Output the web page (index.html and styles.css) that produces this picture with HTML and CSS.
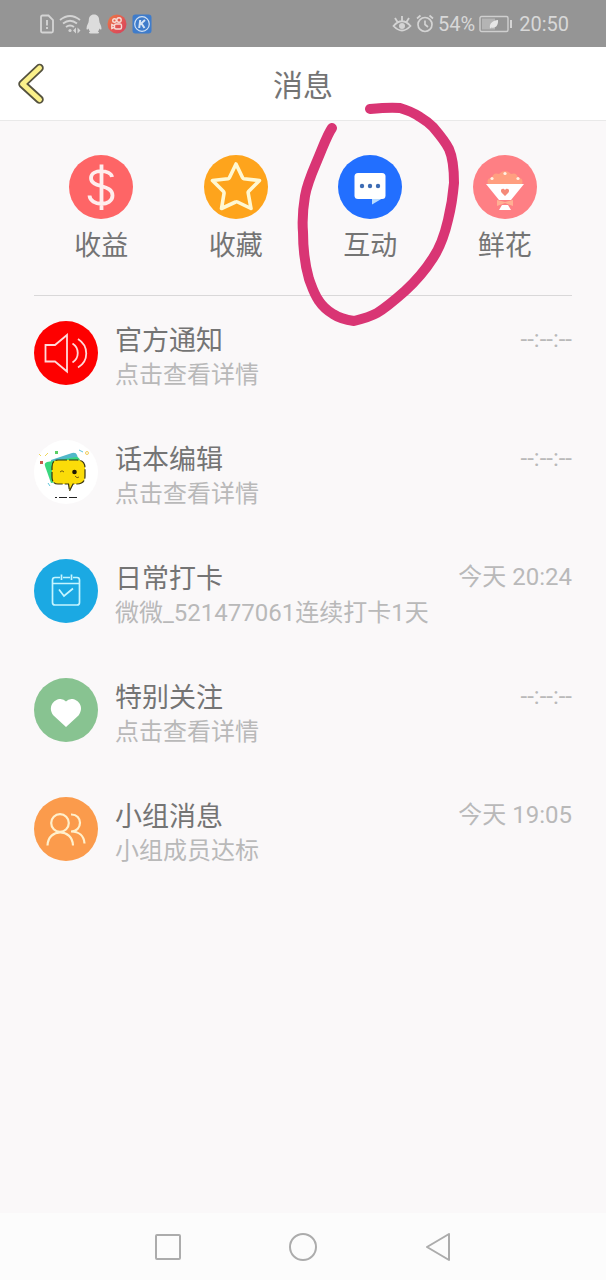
FILE: index.html
```html
<!DOCTYPE html>
<html lang="zh-CN">
<head>
  <meta charset="UTF-8">
  <meta name="viewport" content="width=device-width, initial-scale=1.0">
  <title>消息</title>
  <link rel="stylesheet" href="styles.css">
</head>
<body>
  <div class="status-bar">
    <div class="status-left">
      <svg width="14" height="20" viewBox="0 0 14 20" fill="none" stroke="#d4d4d4" stroke-width="1.8">
        <path d="M2.500 1.500H8.500L13 6V17Q13 18.500 11.500 18.500H2.500Q1 18.500 1 17V3Q1 1.500 2.500 1.500Z"/>
        <path d="M7 6V11.500M7 13V15"/>
      </svg>
      <svg width="22" height="20" viewBox="0 0 22 20" fill="none" stroke="#d4d4d4" stroke-width="1.8">
        <path d="M1 6Q11 -2 21 6M4 9.500Q11 4 18 9.500M7 13Q11 10 15 13"/>
        <circle cx="11" cy="16.500" r="1.600" fill="#d4d4d4" stroke="none"/>
        <path d="M14 16.500L17 13.500V19.500ZM21.500 16.500L18.500 13.500V19.500Z" fill="#d4d4d4" stroke="none"/>
      </svg>
      <svg width="16" height="20" viewBox="0 0 16 20" fill="#dcdcdc">
        <path d="M8 0.500C4.500 0.500 2.800 3 2.800 6.500C2.800 9 0.500 11.500 0.500 14.500C0.500 16 1.500 16 2.500 14.500C3 16 3.500 17 4.200 17.500C2.500 18 2.500 19.500 4.500 19.500H11.500C13.500 19.500 13.500 18 11.800 17.500C12.500 17 13 16 13.500 14.500C14.500 16 15.500 16 15.500 14.500C15.500 11.500 13.200 9 13.200 6.500C13.200 3 11.500 0.500 8 0.500Z"/>
      </svg>
      <svg width="20" height="20" viewBox="0 0 20 20">
        <defs>
          <linearGradient id="kwai" x1="0" y1="0" x2="1" y2="1">
            <stop offset="0" stop-color="#ed7b43"/>
            <stop offset="0.600" stop-color="#e05355"/>
            <stop offset="1" stop-color="#d3435c"/>
          </linearGradient>
        </defs>
        <circle cx="10" cy="10" r="9.500" fill="url(#kwai)"/>
        <g fill="none" stroke="#f8dcd5" stroke-width="1.400">
          <circle cx="7.500" cy="6.500" r="1.800"/>
          <circle cx="12" cy="6" r="2.200"/>
          <rect x="7.500" y="10" width="7" height="5" rx="1.500"/>
          <path d="M7 11.500L4.800 10.500V14.500L7 13.500"/>
        </g>
      </svg>
      <svg width="20" height="20" viewBox="0 0 20 20">
        <rect x="0.500" y="0.500" width="19" height="19" rx="3" fill="#3f7ccb"/>
        <g fill="none" stroke="#d5e3f4">
          <circle cx="10" cy="10" r="7.300" stroke-width="1.200"/>
          <path d="M8.200 6L7.200 14M13 6L8 10.500M9.500 9.500L12.500 14" stroke-width="2"/>
        </g>
      </svg>
    </div>
    <div class="status-right">
      <svg width="20" height="20" viewBox="0 0 20 20" fill="none" stroke="#d4d4d4" stroke-width="1.800">
        <path d="M1.500 12Q10 2.500 18.500 12Q10 21 1.500 12ZM10 2V7M3 4L5.500 8M17 4L14.500 8"/>
        <circle cx="10" cy="12" r="3" fill="#d4d4d4" stroke="none"/>
      </svg>
      <svg width="18" height="20" viewBox="0 0 18 20" fill="none" stroke="#d4d4d4" stroke-width="1.700">
        <circle cx="9" cy="10.500" r="7"/>
        <path d="M9 6.500V10.500L12 13M1 4.500L4.500 1.500M17 4.500L13.500 1.500"/>
      </svg>
      <span>54%</span>
      <svg width="34" height="18" viewBox="0 0 34 18">
        <rect x="1" y="1.500" width="28" height="15" rx="1.500" fill="none" stroke="#cfcfcf" stroke-width="1.400"/>
        <rect x="3" y="3.500" width="13" height="11" fill="#b4b4b4"/>
        <path d="M11 13.500C10 8 14 5.500 19 5C19.500 10 17 13.500 12.500 12.500Z" fill="#e6e6e6"/>
        <path d="M32 5V13" stroke="#d4d4d4" stroke-width="2"/>
      </svg>
      <span class="clock">20:50</span>
    </div>
  </div>

  <header class="header">
    <button class="back" type="button" aria-label="返回">
      <svg width="28" height="44" viewBox="0 0 28 44" fill="none" stroke-linecap="round" stroke-linejoin="round">
        <path d="M22.500 6L5.500 22L22.500 37.500" stroke="#55523f" stroke-width="8.500"/>
        <path d="M22.500 6L5.500 22L22.500 37.500" stroke="#faf08a" stroke-width="5"/>
      </svg>
    </button>
    <h1>消息</h1>
  </header>

  <main class="content">
    <nav class="shortcuts">
      <a class="shortcut" href="#">
        <svg class="icon" viewBox="0 0 64 64" fill="none">
          <circle cx="32" cy="32" r="32" fill="#fe6566"/>
          <path d="M43 22C42 14.500 22 13.500 22 23C22 33.500 43.500 28.500 43.500 40.500C43.500 52 21 51 20.500 40.500M32.500 9.500V55" stroke="#ffeded" stroke-width="3.800"/>
        </svg>
        <span>收益</span>
      </a>
      <a class="shortcut" href="#">
        <svg class="icon" viewBox="0 0 64 64" fill="none">
          <circle cx="32" cy="32" r="32" fill="#fea41c"/>
          <path d="M32 9L38.500 22.500Q39 23.500 40 23.700L55.500 25.500L44.500 36.500Q44 37 44.200 38L47 53.500L33.500 47Q32.500 46.500 31.500 47L17.500 53.500L20 38.500Q20.200 37.500 19.500 36.500L8.500 25.500L24 23.700Q25 23.500 25.500 22.500Z" stroke="#fff8d2" stroke-width="3.600" stroke-linejoin="round"/>
        </svg>
        <span>收藏</span>
      </a>
      <a class="shortcut" href="#">
        <svg class="icon" viewBox="0 0 64 64">
          <circle cx="32" cy="32" r="32" fill="#226fff"/>
          <path d="M34 43H45L34 49.500Z" fill="#b9dcff"/>
          <rect x="16.500" y="18" width="31" height="26" rx="3.500" fill="#fff"/>
          <g fill="#3d6cb4">
            <circle cx="24" cy="31" r="2.200"/>
            <circle cx="32" cy="31" r="2.200"/>
            <circle cx="40" cy="31" r="2.200"/>
          </g>
        </svg>
        <span>互动</span>
        <!-- hand-drawn marker loop -->
        <svg class="marker" viewBox="296 100 166 228" fill="none" aria-hidden="true">
          <path d="M332 128C327 135 323 147 317 161C311 175 307 184 305 196C303 208 302 220 303 232C303 248 305 265 309 279C312 287 314 294 319 301C323 307 328 311 333 314C339 318 347 320 354 321C362 319 370 317 377 313C387 307 396 299 405 291C417 280 426 269 433 258C441 246 445 233 448 220C451 208 453 195 454 183C454 170 453 158 449 149C445 141 439 134 433 127C429 123 425 120 420 117C414 113 407 110 400 108C391 107 380 108 370 109"/>
        </svg>
      </a>
      <a class="shortcut" href="#">
        <svg class="icon" viewBox="0 0 64 64">
          <circle cx="32" cy="32" r="32" fill="#fe7f84"/>
          <path d="M15 29Q13 23 19 23Q20 17 26 19Q32 13 38 19Q44 17 45 23Q51 23 49 29Z" fill="#ff9f80"/>
          <g fill="#fff1e3">
            <circle cx="19" cy="23.500" r="1.600"/>
            <circle cx="32" cy="18.500" r="1.600"/>
            <circle cx="45" cy="23.500" r="1.600"/>
          </g>
          <path d="M13 29H51L38 45H26Z" fill="#fff"/>
          <path d="M24 45L32 47L40 45V51L32 48L24 51Z" fill="#ffb093"/>
          <path d="M29 50H35L38 55H26Z" fill="#fff"/>
          <path d="M32 41L28.500 37.500C26.500 34 30.500 32.500 32 35C33.500 32.500 37.500 34 35.500 37.500Z" fill="#f58a78"/>
        </svg>
        <span>鲜花</span>
      </a>
    </nav>

    <ul class="messages">
      <li>
        <a class="message" href="#">
          <svg class="icon" viewBox="0 0 64 64" fill="none" stroke="#ffd9d9" stroke-width="1.800">
            <circle cx="32" cy="32" r="32" fill="#fe0000" stroke="none"/>
            <path d="M11.500 24H21L33 14V50.500L21 40.500H11.500ZM38.500 22.500C45.500 27 45.500 37 38.500 41.500M44 18C55 25 55 40 44 46.500"/>
          </svg>
          <div class="text">
            <h2>官方通知</h2>
            <p>点击查看详情</p>
          </div>
          <time>--:--:--</time>
        </a>
      </li>
      <li>
        <a class="message" href="#">
          <svg class="icon" viewBox="0 0 64 64" fill="none">
            <circle cx="32" cy="32" r="32" fill="#fff"/>
            <path d="M17 20L38 13Q42 12 43 15L48 30L20 40Z" fill="#50b8c9"/>
            <path d="M11 26Q10 23 13 22L42 17Q45 17 46 20L49 38L17 43Z" fill="#39d77e"/>
            <path d="M24 20H43Q51 20 51 28V36Q51 44 43 44H39L35.500 51L34.500 44H24Q18 44 18 37V27Q18 20 24 20Z" fill="#fbdc09" stroke="#383410" stroke-width="1.200" stroke-dasharray="9 2"/>
            <circle cx="40.500" cy="32" r="2.300" fill="#1c1903"/>
            <path d="M26 32Q28 29.500 30 32M41 36Q43 39 45 37" stroke="#775f10"/>
            <path d="M21 57.500H23M25 57.500H33M35 57.500H43" stroke="#222" stroke-width="1.200"/>
            <path d="M5 14L7 16M11 16L14 13" stroke="#eed65b"/>
            <path d="M45 10L49 12M14 43L16 46" stroke="#61c6dc"/>
            <rect x="21" y="11" width="3" height="3" fill="#59cf63"/>
            <rect x="6" y="21" width="3" height="3" fill="#c85b4b"/>
            <circle cx="53" cy="13" r="1.500" stroke="#f1ce60"/>
          </svg>
          <div class="text">
            <h2>话本编辑</h2>
            <p>点击查看详情</p>
          </div>
          <time>--:--:--</time>
        </a>
      </li>
      <li>
        <a class="message" href="#">
          <svg class="icon" viewBox="0 0 64 64" fill="none" stroke="#c5f5ff" stroke-width="1.700">
            <circle cx="32" cy="32" r="32" fill="#1ba9e3" stroke="none"/>
            <path d="M26 18.500H21Q18.500 18.500 18.500 21V43.500Q18.500 46 21 46H43Q45.500 46 45.500 43.500V21Q45.500 18.500 43 18.500H39M29 18.500H36M27.500 15.500V21M37.500 15.500V21M18.500 24.500H45.500M25 30.500L30 37L39 29.500"/>
          </svg>
          <div class="text">
            <h2>日常打卡</h2>
            <p>微微_521477061连续打卡1天</p>
          </div>
          <time>今天 20:24</time>
        </a>
      </li>
      <li>
        <a class="message" href="#">
          <svg class="icon" viewBox="0 0 64 64">
            <circle cx="32" cy="32" r="32" fill="#88c391"/>
            <path d="M32 49L19.500 37.500C13 29 20 21 26.500 21Q30 21 32 23.500Q34 21 37.500 21C44 21 51 29 44.500 37.500Z" fill="#fff"/>
          </svg>
          <div class="text">
            <h2>特别关注</h2>
            <p>点击查看详情</p>
          </div>
          <time>--:--:--</time>
        </a>
      </li>
      <li>
        <a class="message" href="#">
          <svg class="icon" viewBox="0 0 64 64" fill="none" stroke="#fff0cc" stroke-width="2.200">
            <circle cx="32" cy="32" r="32" fill="#fb9b4c" stroke="none"/>
            <circle cx="26" cy="26" r="8.800"/>
            <path d="M13.500 48.500C14 31 38.500 31 39 48.500M37 17.500C49 17 49 34.500 37 34.500C45 34.500 50 39 50.500 46.500"/>
          </svg>
          <div class="text">
            <h2>小组消息</h2>
            <p>小组成员达标</p>
          </div>
          <time>今天 19:05</time>
        </a>
      </li>
    </ul>
  </main>

  <footer class="nav-bar">
    <button type="button" aria-label="最近任务">
      <svg width="28" height="28" viewBox="0 0 28 28"><rect x="2" y="2" width="24" height="24" rx="1"/></svg>
    </button>
    <button type="button" aria-label="主页">
      <svg width="28" height="28" viewBox="0 0 28 28"><circle cx="14" cy="14" r="13"/></svg>
    </button>
    <button type="button" aria-label="返回上一页">
      <svg width="28" height="28" viewBox="0 0 28 28"><path d="M25 1V27L3 14Z" stroke-linejoin="round"/></svg>
    </button>
  </footer>
</body>
</html>
```

FILE: styles.css
```css
* {
  box-sizing: border-box;
}
body {
  margin: 0;
  min-height: 100vh;
  display: flex;
  flex-direction: column;
  font-family: Roboto, 'Noto Sans CJK SC', sans-serif;
  background-color: #faf8f9;
  color: #747474;
}
h1, h2, p, ul {
  margin: 0;
  padding: 0;
  font-weight: normal;
}
svg {
  display: block;
  flex-shrink: 0;
}
a {
  color: inherit;
  text-decoration: none;
}
button {
  padding: 0;
  border: none;
  background: none;
  cursor: pointer;
}
.status-bar {
  display: flex;
  justify-content: space-between;
  align-items: center;
  height: 47px;
  padding: 0 37px 0 40px;
  background-color: #959595;
  color: #d8d8d8;
  font-size: 20px;
}
.status-left {
  display: flex;
  gap: 5px;
}
.status-right {
  display: flex;
  align-items: center;
  gap: 4px;
}
.clock {
  padding-left: 2px;
}
.header {
  display: grid;
  grid-template-columns: 28px 1fr 28px;
  align-items: center;
  height: 74px;
  padding: 0 17px;
  background-color: #fff;
  border-bottom: 1px solid #e9e9e9;
}
h1 {
  padding-top: 5px;
  text-align: center;
  font-size: 30px;
  line-height: 44px;
}
.content {
  flex: 1;
  padding: 0 34px;
}
.shortcuts {
  display: grid;
  grid-template-columns: repeat(4, 1fr);
  padding: 34px 0 29px;
  border-bottom: 1px solid #d9d8d9;
}
.shortcut {
  position: relative;
  display: flex;
  flex-direction: column;
  align-items: center;
  gap: 7px;
  font-size: 27px;
  line-height: 40px;
}
.icon {
  width: 64px;
  height: 64px;
}
.marker {
  position: absolute;
  top: -55px;
  left: calc(50% - 74px);
  width: 166px;
  height: 228px;
  stroke: #d93574;
  stroke-width: 10px;
  stroke-linecap: round;
  stroke-linejoin: round;
  pointer-events: none;
}
.messages {
  list-style: none;
}
.message {
  display: flex;
  align-items: flex-start;
  min-height: 119px;
  padding-top: 25px;
}
.text {
  flex: 1;
  padding: 2px 0 0 17px;
}
h2 {
  font-size: 27px;
  line-height: 36px;
}
p, time {
  font-size: 24px;
  line-height: 32px;
  color: #b9b9b9;
}
time {
  padding-top: 2px;
}
.nav-bar {
  display: flex;
  justify-content: center;
  align-items: center;
  gap: 107px;
  height: 67px;
  background-color: #fcfcfc;
}
.nav-bar svg {
  fill: none;
  stroke: #acacac;
  stroke-width: 2px;
}
```
